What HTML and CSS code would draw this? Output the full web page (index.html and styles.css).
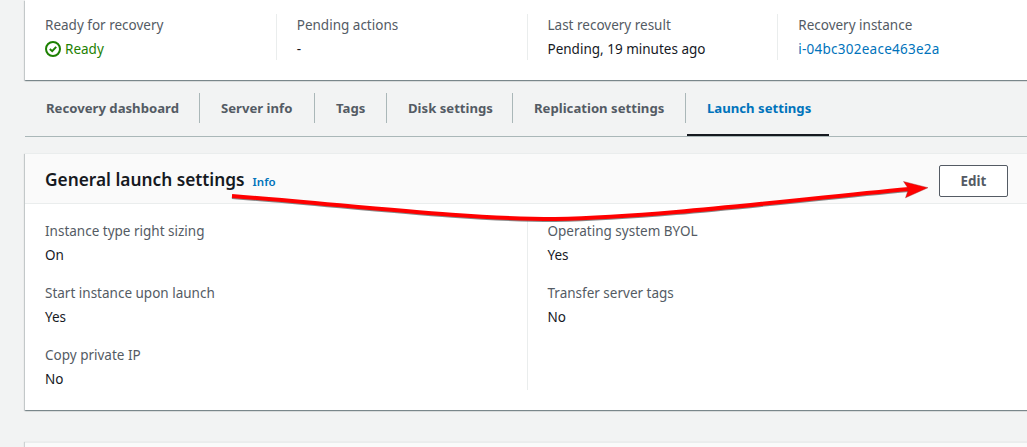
FILE: index.html
```html
<!DOCTYPE html>
<html lang="en">
<head>
<meta charset="utf-8">
<title>Launch settings</title>
<link rel="stylesheet" href="styles.css">
</head>
<body>
<main class="page">
  <section class="card summary">
    <div class="col"><div class="label">Ready for recovery</div>
      <div class="value status"><svg class="check" viewBox="0 0 16 16"><circle cx="8" cy="8" r="7"/><path d="M4.8 8.1 7.2 10.2 11.2 5.9"/></svg><span>Ready</span></div></div>
    <div class="col"><div class="label">Pending actions</div><div class="value">-</div></div>
    <div class="col"><div class="label">Last recovery result</div><div class="value">Pending, 19 minutes ago</div></div>
    <div class="col"><div class="label">Recovery instance</div><a class="value link">i-04bc302eace463e2a</a></div>
  </section>

  <nav class="tabs">
    <a class="tab t-dash"><span>Recovery dashboard</span></a>
    <a class="tab t-info"><span>Server info</span></a>
    <a class="tab t-tags"><span>Tags</span></a>
    <a class="tab t-disk"><span>Disk settings</span></a>
    <a class="tab t-repl"><span>Replication settings</span></a>
    <a class="tab t-launch active"><span>Launch settings</span></a>
  </nav>

  <section class="card general">
    <header class="head">
      <h2 class="title">General launch settings</h2>
      <a class="info">Info</a>
      <button class="edit">Edit</button>
    </header>
    <div class="body">
      <div class="col stack">
        <div><div class="label">Instance type right sizing</div><div class="value">On</div></div>
        <div><div class="label">Start instance upon launch</div><div class="value">Yes</div></div>
        <div><div class="label">Copy private IP</div><div class="value">No</div></div>
      </div>
      <div class="col stack">
        <div><div class="label">Operating system BYOL</div><div class="value">Yes</div></div>
        <div><div class="label">Transfer server tags</div><div class="value">No</div></div>
      </div>
    </div>
  </section>

  <section class="card next"></section>
</main>
<svg class="arrow" viewBox="0 0 1027 447">
  <g class="arrow-shadow"><path class="line" d="M232 197C350 206 460 220 555 220C660 218 790 201 909 190"/></g>
  <path class="line" d="M232 196C350 205 460 219 555 219C660 217 790 200 909 189"/>
  <path class="tip" d="M903.500 181.500 928 187.700 905.500 197.800 908.500 189Z"/>
</svg>
</body>
</html>
```

FILE: styles.css
```css
* { box-sizing: border-box; }
body {
  margin: 0;
  height: 447px;
  overflow: hidden;
  background: #f2f3f3;
  color: #16191f;
  font: 13.5px/22px "Noto Sans", "Open Sans", sans-serif;
}
.page { width: 1003px; margin-left: 25px; }
.card {
  background: #fff;
  border-top: 1px solid #eaeded;
  box-shadow: 0 1px 1px 0 rgba(0, 28, 36, .3), 1px 1px 1px 0 rgba(0, 28, 36, .15), -1px 1px 1px 0 rgba(0, 28, 36, .15);
}
.summary {
  display: grid;
  grid-template-columns: repeat(4, 1fr);
  padding: 14px 0 20px;
  border-top: 0;
}
.col { padding-left: 20px; }
.col + .col { border-left: 1px solid #eaeded; }
.label { color: #545b64; }
.value { display: block; margin-top: 2px; }
.link { color: #0073bb; letter-spacing: .25px; }
.status { display: flex; align-items: center; gap: 4px; color: #1d8102; }
.check { width: 16px; height: 16px; fill: none; stroke: #1d8102; stroke-width: 2; }

.tabs { display: flex; height: 57px; padding-top: 13px; border-bottom: 1px solid #aab7b8; font-size: 13.15px; font-weight: 700; color: #545b64; }
.tab { height: 30px; line-height: 30px; padding-left: 21px; border-right: 1px solid #aab7b8; white-space: nowrap; }
.t-dash { width: 175px; }
.t-info { width: 115px; }
.t-tags { width: 72px; }
.t-disk { width: 126px; }
.t-repl { width: 173px; }
.t-launch { width: 142px; margin-left: 1px; padding-left: 20px; }
.active { height: 43px; border-right: 0; border-bottom: 2px solid #16191f; color: #0073bb; }

.general { margin-top: 16px; }
.head { display: flex; align-items: center; height: 50px; padding: 0 20px; background: #fafafa; border-bottom: 1px solid #eaeded; }
.title { margin: 2px 0 0; font-size: 17.3px; line-height: 22px; font-weight: 600; }
.info { margin: 7px 0 0 8px; font-size: 11.5px; line-height: 20px; font-weight: 600; color: #0073bb; }
.edit {
  margin: 5px 0 0 auto;
  width: 69px;
  height: 32px;
  padding: 0;
  background: #fff;
  border: 1px solid #545b64;
  border-radius: 2px;
  color: #545b64;
  font: 700 13.4px/20px "Noto Sans", sans-serif;
}
.body { display: grid; grid-template-columns: 1fr 1fr; padding: 16px 0 20px; }
.stack { display: flex; flex-direction: column; gap: 16px; }
.next { height: 5px; margin-top: 32px; background: #fafafa; box-shadow: -1px 0 1px 0 rgba(0, 28, 36, .15); }

/* Annotation drawn over the page */
.arrow { position: absolute; left: 0; top: 0; width: 1027px; height: 447px; pointer-events: none; }
.line { fill: none; stroke: #f00; stroke-width: 4; }
.arrow-shadow .line { stroke: #555; opacity: .7; }
.tip { fill: #f00; stroke: #933; stroke-width: .4; }
```
